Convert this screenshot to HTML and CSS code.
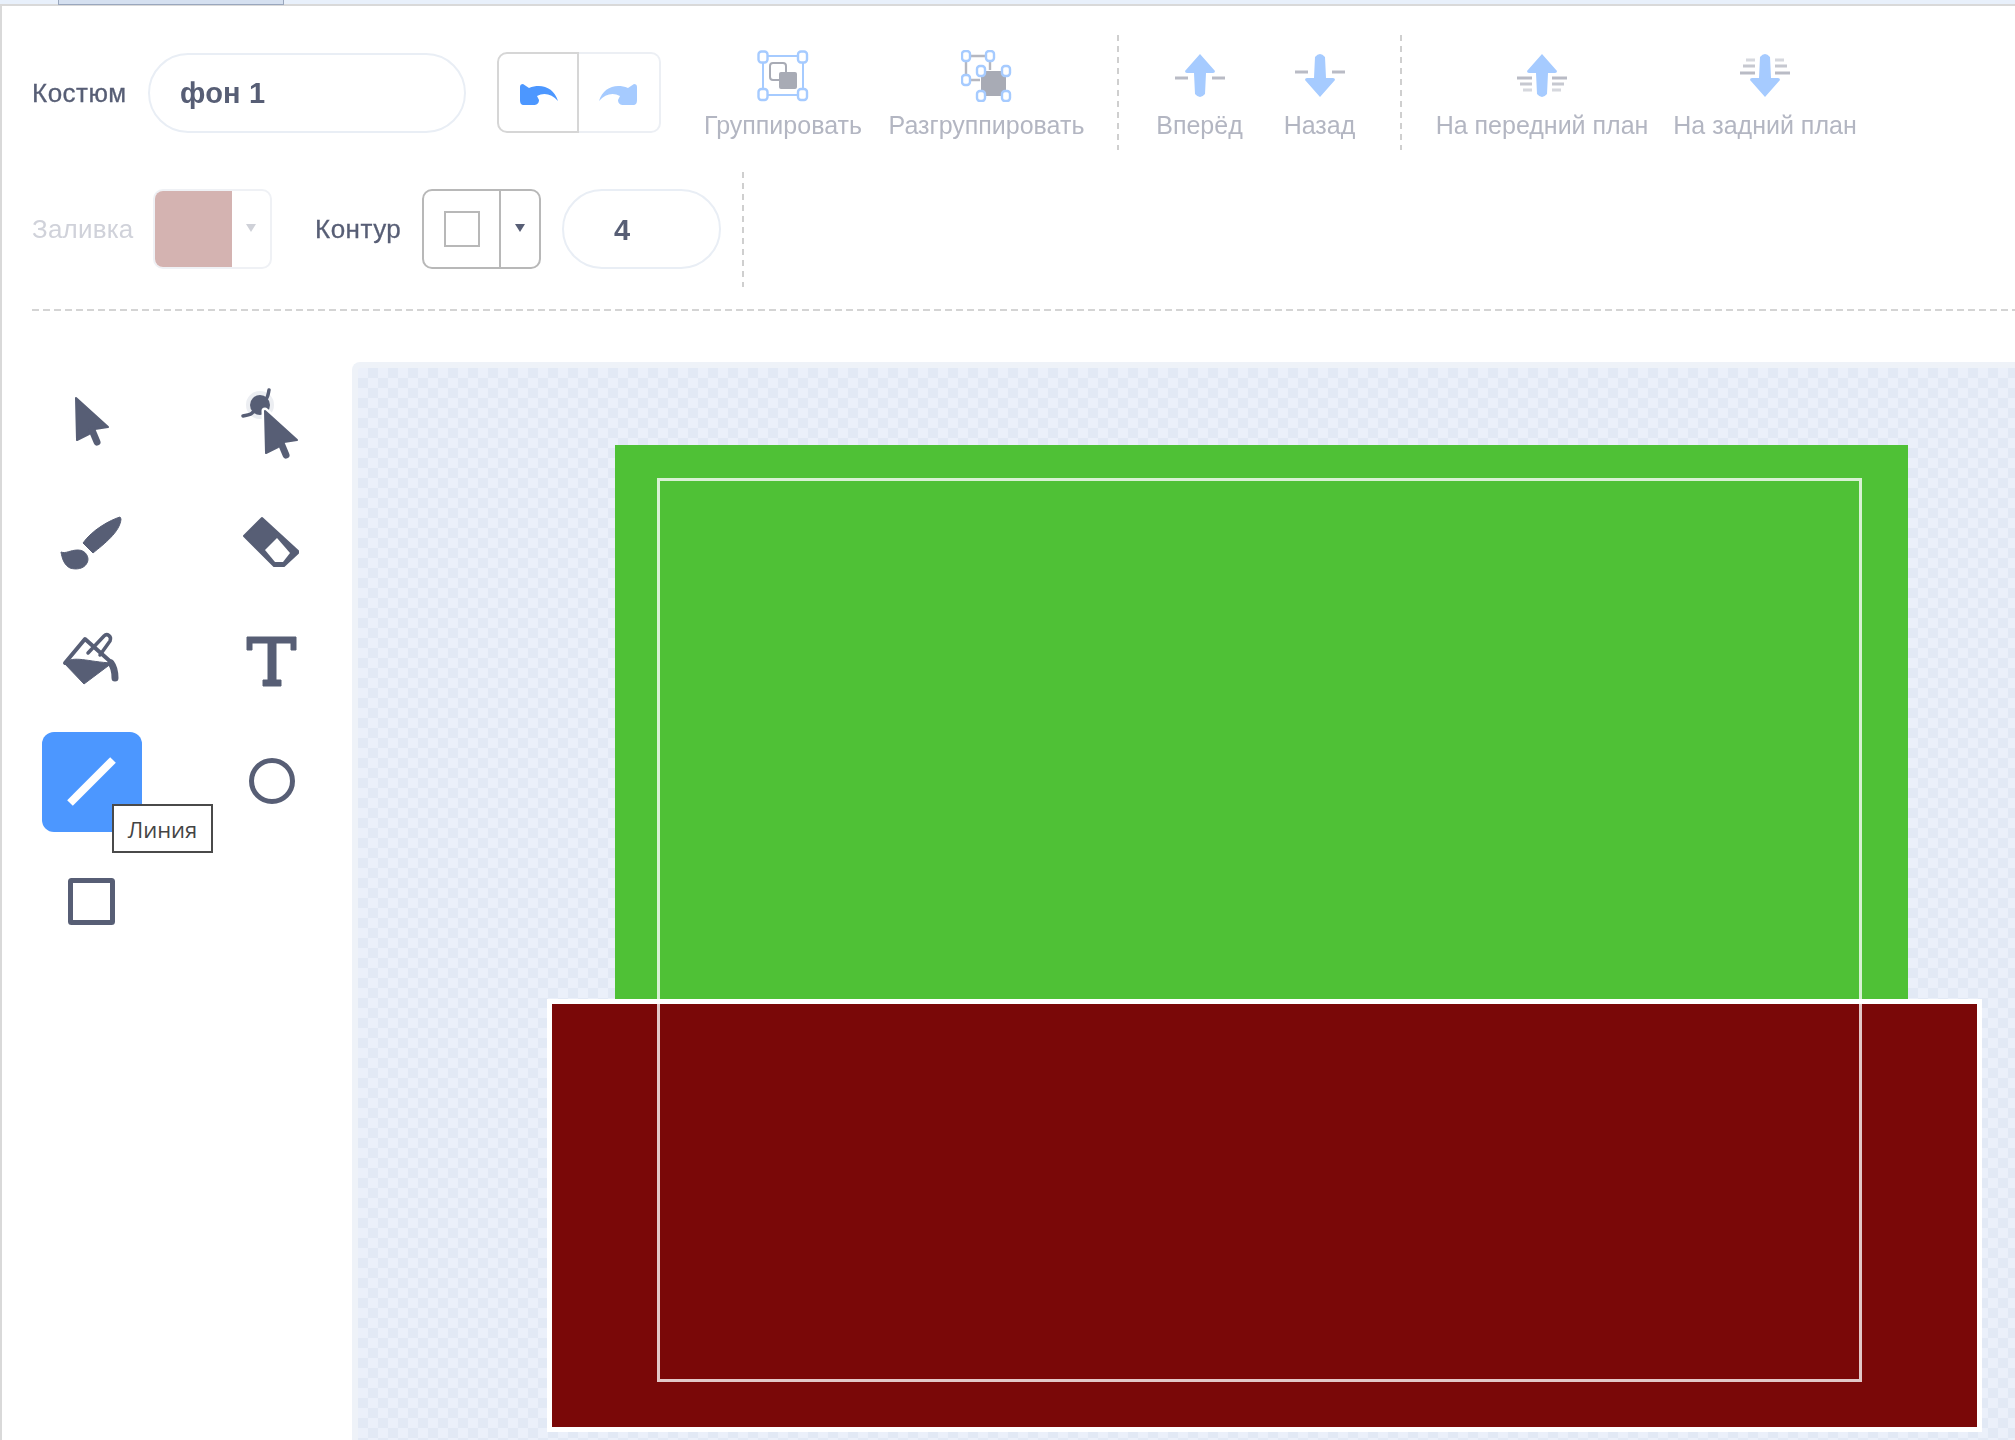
FILE: index.html
```html
<!DOCTYPE html>
<html lang="ru">
<head>
<meta charset="utf-8">
<title>Костюм</title>
<link rel="stylesheet" href="styles.css">
</head>
<body>
<div class="tabstrip"><div class="tab"></div></div>
<div class="editor">
  <div class="row row-one">
    <span class="label label-costume">Костюм</span>
    <div class="pill pill-name">фон 1</div>
    <div class="undo-group">
      <button class="undo-btn undo-on" aria-label="undo">
        <svg width="81" height="81" viewBox="1 0 81 81"><path class="ic-undo" d="M22 33Q22 30 25 30L31 34C44 29 56 34 60 47C54 40 46 38 39 42L41 46C41 50 38 51 36 51H26C23 51 22 49 22 46Z"/></svg>
      </button>
      <button class="undo-btn undo-off" aria-label="redo">
        <svg width="81" height="81" viewBox="1 0 81 81"><path class="ic-redo" d="M59 33Q59 30 56 30L50 34C37 29 25 34 21 47C27 40 35 38 42 42L40 46C40 50 43 51 45 51H55C58 51 59 49 59 46Z"/></svg>
      </button>
    </div>
    <div class="action action-group">
      <svg class="act-ic" width="52" height="52" viewBox="0 0 52 52">
        <rect class="sel" x="6" y="6" width="40" height="39"/>
        <rect class="gr-o" x="13" y="13" width="16" height="17" rx="3"/>
        <rect class="gr-f" x="22" y="22" width="18" height="17" rx="2"/>
        <rect class="hd" x="1.5" y="1.5" width="9" height="11" rx="3"/><rect class="hd" x="41" y="1.5" width="9" height="11" rx="3"/>
        <rect class="hd" x="1.5" y="39" width="9" height="11" rx="3"/><rect class="hd" x="41" y="39" width="9" height="11" rx="3"/>
      </svg>
      <span class="act-text">Группировать</span>
    </div>
    <div class="action action-ungroup">
      <svg class="act-ic" width="52" height="52" viewBox="2 0 52 52">
        <path class="gr-l" d="M7 6H31V20M7 6V30H21"/>
        <rect class="gr-f" x="22" y="21" width="25" height="25"/>
        <rect class="hd" x="3" y="1" width="8" height="10" rx="3"/><rect class="hd" x="27" y="1" width="8" height="10" rx="3"/>
        <rect class="hd" x="3" y="25" width="8" height="10" rx="3"/>
        <rect class="hd" x="18" y="16" width="8" height="10" rx="3"/><rect class="hd" x="43" y="16" width="8" height="10" rx="3"/>
        <rect class="hd" x="18" y="41" width="8" height="10" rx="3"/><rect class="hd" x="43" y="41" width="8" height="10" rx="3"/>
      </svg>
      <span class="act-text">Разгруппировать</span>
    </div>
    <div class="dashed dash-a"></div>
    <div class="action action-forward">
      <svg class="act-ic" width="52" height="52" viewBox="0 0 52 52">
        <path class="dsh" d="M1 28H14M38 28H51"/>
        <path class="arr" d="M26 4L41 21Q41 23 39 23H32L31 44Q26 50 21 44L20 23H13Q11 23 11 21Z"/>
      </svg>
      <span class="act-text">Вперёд</span>
    </div>
    <div class="action action-backward">
      <svg class="act-ic" width="52" height="52" viewBox="0 0 52 52">
        <path class="dsh" d="M1 22H14M38 22H51"/>
        <path class="arr" d="M26 47L41 30Q41 28 39 28H32L31 7Q26 1 21 7L20 28H13Q11 28 11 30Z"/>
      </svg>
      <span class="act-text">Назад</span>
    </div>
    <div class="dashed dash-b"></div>
    <div class="action action-front">
      <svg class="act-ic" width="52" height="52" viewBox="0 0 52 52">
        <path class="dsh" d="M1 28H16M36 28H51"/><path class="dsh dsh-2" d="M4 34H16M36 34H48"/><path class="dsh dsh-3" d="M7 40H16M36 40H45"/>
        <path class="arr" d="M26 4L41 21Q41 23 39 23H32L31 44Q26 50 21 44L20 23H13Q11 23 11 21Z"/>
      </svg>
      <span class="act-text">На передний план</span>
    </div>
    <div class="action action-back">
      <svg class="act-ic" width="52" height="52" viewBox="0 0 52 52">
        <path class="dsh dsh-3" d="M7 10H16M36 10H45"/><path class="dsh dsh-2" d="M4 16H16M36 16H48"/><path class="dsh" d="M1 23H16M36 23H51"/>
        <path class="arr" d="M26 47L41 30Q41 28 39 28H32L31 7Q26 1 21 7L20 28H13Q11 28 11 30Z"/>
      </svg>
      <span class="act-text">На задний план</span>
    </div>
  </div>

  <div class="row row-two">
    <span class="label label-fill">Заливка</span>
    <div class="picker picker-fill">
      <div class="swatch"></div>
      <div class="caret-box"><span class="caret"></span></div>
    </div>
    <span class="label label-outline">Контур</span>
    <div class="picker picker-outline">
      <div class="stroke-box"><span class="stroke-sq"></span></div>
      <div class="caret-box"><span class="caret"></span></div>
    </div>
    <div class="pill pill-width">4</div>
    <div class="dashed dash-c"></div>
  </div>

  <div class="rule"></div>

  <div class="main">
    <div class="tools">
      <div class="tool"><svg width="100" height="100" viewBox="0 0 100 100"><path class="tic" d="M34 26L66 55L53 57L47 62L35 68Z"/><path class="ttail" d="M50 58L55 70"/></svg></div>
      <div class="tool"><svg width="100" height="100" viewBox="0 0 100 100">
        <circle class="halo" cx="38" cy="33" r="14"/>
        <path class="tln tln-thin" d="M21 44C26 43 29 43 31 40M47 18C46 23 46 25 44 27"/>
        <circle class="tknob" cx="38" cy="33" r="10"/>
        <path class="tcut-line" d="M43 39L75 68L62 70L56 75L44 81Z"/>
        <path class="tic" d="M43 39L75 68L62 70L56 75L44 81Z"/><path class="ttail" d="M59 71L64 83"/>
      </svg></div>
      <div class="tool"><svg width="100" height="100" viewBox="0 0 100 100">
        <path class="tbr" d="M78 25C68 28 50 38 41 51L51 61C62 52 78 40 79 27Z"/>
        <path class="tbr" d="M19 60C24 62 28 58 36 58C44 58 48 66 45 71C42 77 34 78 28 76C22 73 20 66 19 60Z"/>
      </svg></div>
      <div class="tool"><svg width="100" height="100" viewBox="0 0 100 100">
        <path class="tic" d="M40 26L22 44L52 74H62L76 61V59Z"/>
        <path class="tcut" d="M55 46L68 61L61 70H53L43 58Z"/>
      </svg></div>
      <div class="tool"><svg width="100" height="100" viewBox="0 0 100 100">
        <path class="tln" d="M23 51L43 27L70 51"/>
        <path class="tbr" d="M22 51C32 43 46 50 70 51L42 72Z"/>
        <path class="tln tln-thin" d="M46 41L62 24C65 21 70 24 68 29L58 43"/>
        <path class="tdrip" d="M69 51C72 55 73 60 73 66"/>
      </svg></div>
      <div class="tool"><svg width="100" height="100" viewBox="0 0 100 100"><path class="tbr" d="M25 25H74V38H69V31H54V68H59V74H41V68H46V31H30V38H25Z"/></svg></div>
      <div class="tool tool-active"><svg width="100" height="100" viewBox="0 0 100 100"><path class="tline" d="M28 71L71 28"/></svg>
        <div class="tooltip">Линия</div>
      </div>
      <div class="tool"><svg width="100" height="100" viewBox="0 0 100 100"><circle class="tsh" cx="50" cy="49" r="20.5"/></svg></div>
      <div class="tool"><svg width="100" height="100" viewBox="0 0 100 100"><rect class="tsh" x="28.5" y="28.5" width="42" height="42" rx="1"/></svg></div>
    </div>
    <div class="canvas">
      <div class="shape shape-green"></div>
      <div class="shape shape-red"></div>
      <div class="shape shape-frame"></div>
    </div>
  </div>
</div>
</body>
</html>
```
FILE: styles.css
```css
* { box-sizing: border-box; }
html, body { margin: 0; height: 100%; }
body {
  width: 2015px;
  height: 1440px;
  overflow: hidden;
  background: #fff;
  font-family: "Liberation Sans", Arial, sans-serif;
  color: #575e75;
  filter: blur(0.5px);
}
.tabstrip {
  height: 6px;
  background: #e8f0fb;
  border-bottom: 2px solid #d9d9d9;
}
.tab {
  margin-left: 58px;
  width: 226px;
  height: 5px;
  background: #d5e0f0;
  border-right: 1px solid #9aa7bd;
  border-left: 1px solid #9aa7bd;
  border-bottom: 1px solid #9aa7bd;
}
.editor {
  height: 1434px;
  border-left: 2px solid #d9d9d9;
  padding-left: 30px;
  padding-top: 29px;
}
.row { display: flex; align-items: center; }
.row-one { height: 115px; }
.row-two {
  height: 114px;
  margin-top: 22px;
}
.label { font-size: 26px; letter-spacing: 0.5px; -webkit-text-stroke: 0.3px #575e75; white-space: nowrap; padding-top: 1px; }
.label-costume { width: 116px; }
.pill {
  height: 80px;
  border: 2px solid #e9eef5;
  border-radius: 40px;
  display: flex;
  align-items: center;
  font-size: 29px;
  font-weight: bold;
  color: #575e75;
  padding-top: 2px;
}
.pill-name { width: 318px; padding-left: 30px; letter-spacing: 0.2px; }
.pill-width { width: 159px; margin-left: 21px; padding-left: 50px; }
.undo-group {
  display: flex;
  margin-left: 31px;
  width: 163px;
  height: 81px;
}
.undo-btn {
  width: 82px;
  height: 81px;
  padding: 0;
  background: #fff;
  display: block;
}
.undo-btn svg { display: block; }
.undo-on { border: 2px solid #d6d6d6; border-radius: 10px 0 0 10px; }
.undo-off { border: 2px solid #eceff4; border-left: 0; border-radius: 0 10px 10px 0; }
.ic-undo { fill: #4c97ff; }
.ic-redo { fill: #a6cbff; }
.action {
  height: 115px;
  padding-top: 15px;
  display: flex;
  flex-direction: column;
  align-items: center;
  flex: none;
}
.act-ic { flex: none; display: block; }
.act-text {
  margin-top: 9px;
  font-size: 25px;
  color: #b3b6c2;
  white-space: nowrap;
}
.action-group { width: 156px; margin-left: 45px; }
.action-ungroup { width: 195px; margin-left: 28px; }
.action-forward { width: 85px; margin-left: 38px; }
.action-backward { width: 71px; margin-left: 42px; }
.action-front { width: 212px; margin-left: 34px; }
.action-back { width: 182px; margin-left: 26px; }
.sel { fill: none; stroke: #a6cbff; stroke-width: 2; }
.hd { fill: #fff; stroke: #a6cbff; stroke-width: 2.4; }
.gr-o { fill: none; stroke: #a8abb5; stroke-width: 2; }
.gr-f { fill: #a8abb5; }
.gr-l { fill: none; stroke: #b5b7c0; stroke-width: 2.4; }
.arr { fill: #a6cbff; }
.dsh { fill: none; stroke: #b9bbc5; stroke-width: 3; }
.dsh-2 { stroke: #c6c8d0; }
.dsh-3 { stroke: #d6d8de; }
.dashed {
  flex: none;
  width: 2px;
  height: 115px;
  background: repeating-linear-gradient(to bottom, #cfcfcf 0 6px, transparent 6px 11px);
}
.dash-a { margin-left: 33px; }
.dash-b { margin-left: 45px; }
.dash-c { margin-left: 21px; }
.label-fill { width: 102px; letter-spacing: 0.2px; color: #d0d2da; -webkit-text-stroke: 0; }
.label-outline { width: 85px; margin-left: 43px; }
.picker {
  display: flex;
  height: 80px;
  border-radius: 10px;
  overflow: hidden;
  flex: none;
}
.picker-fill { width: 119px; margin-left: 19px; border: 2px solid #eff1f5; }
.picker-outline { width: 119px; margin-left: 22px; border: 2px solid #b8b8b8; }
.swatch { width: 79px; margin: -2px 0 -2px -2px; background: #d4b3b1; }
.stroke-box {
  width: 77px;
  display: flex;
  align-items: center;
  justify-content: center;
  border-right: 2px solid #b8b8b8;
}
.stroke-sq { width: 36px; height: 36px; border: 2px solid #b8b8b8; display: block; }
.caret-box { flex: 1; display: flex; align-items: center; justify-content: center; }
.caret {
  width: 0;
  height: 0;
  border-left: 5px solid transparent;
  border-right: 5px solid transparent;
  border-top: 8px solid #575e75;
  margin-top: -3px;
}
.picker-fill .caret { border-top-color: #cfd1d8; }
.rule {
  height: 2px;
  margin-top: 23px;
  background: repeating-linear-gradient(to right, #d4d4d4 0 7px, transparent 7px 11px);
}
.main {
  display: flex;
  height: 1129px;
}
.tools {
  flex: none;
  width: 310px;
  margin-left: 10px;
  padding-top: 61px;
  display: grid;
  grid-template-columns: 100px 100px;
  grid-auto-rows: 100px;
  column-gap: 80px;
  row-gap: 20px;
  align-content: start;
}
.tool { width: 100px; height: 100px; position: relative; border-radius: 12px; }
.tool svg { display: block; }
.tool-active { background: #4c97ff; }
.tic { fill: #575e75; stroke: #575e75; stroke-width: 2; stroke-linejoin: round; }
.tbr { fill: #575e75; stroke: #575e75; stroke-width: 1; stroke-linejoin: round; }
.ttail { fill: none; stroke: #575e75; stroke-width: 7; stroke-linecap: round; }
.tknob { fill: #575e75; }
.tcut-line { fill: #fff; stroke: #fff; stroke-width: 7; stroke-linejoin: round; }
.tcut { fill: #fff; }
.tln { fill: none; stroke: #575e75; stroke-width: 4; stroke-linecap: round; stroke-linejoin: round; }
.tln-thin { stroke-width: 3.5; }
.tdrip { fill: none; stroke: #575e75; stroke-width: 7; stroke-linecap: round; }
.halo { fill: #eceef2; }
.tline { stroke: #fff; stroke-width: 8; fill: none; }
.tsh { fill: none; stroke: #575e75; stroke-width: 5; }
.tooltip {
  position: absolute;
  left: 70px;
  top: 72px;
  width: 101px;
  height: 49px;
  background: #fff;
  border: 2px solid #4a4a4a;
  color: #444;
  font-family: "Open Sans", sans-serif;
  font-size: 22px;
  display: flex;
  align-items: center;
  justify-content: center;
  z-index: 2;
}
.canvas {
  position: relative;
  flex: none;
  width: 1700px;
  height: 1120px;
  margin-top: 51px;
  border: 6px solid #eef2f8;
  border-right: 0;
  border-radius: 8px 0 0 0;
  background-color: #ebf0fa;
  background-image:
    linear-gradient(45deg, #e2e9f5 25%, transparent 25%, transparent 75%, #e2e9f5 75%),
    linear-gradient(45deg, #e2e9f5 25%, transparent 25%, transparent 75%, #e2e9f5 75%);
  background-size: 20px 20px;
  background-position: 0 0, 10px 10px;
}
.shape { position: absolute; }
.shape-green { left: 257px; top: 77px; width: 1293px; height: 554px; background: #4fc136; }
.shape-red { left: 189px; top: 631px; width: 1435px; height: 433px; background: #7a0808; border: 5px solid #fff; }
.shape-frame { left: 299px; top: 110px; width: 1205px; height: 904px; border: 3px solid rgba(255,255,255,0.78); }
```
